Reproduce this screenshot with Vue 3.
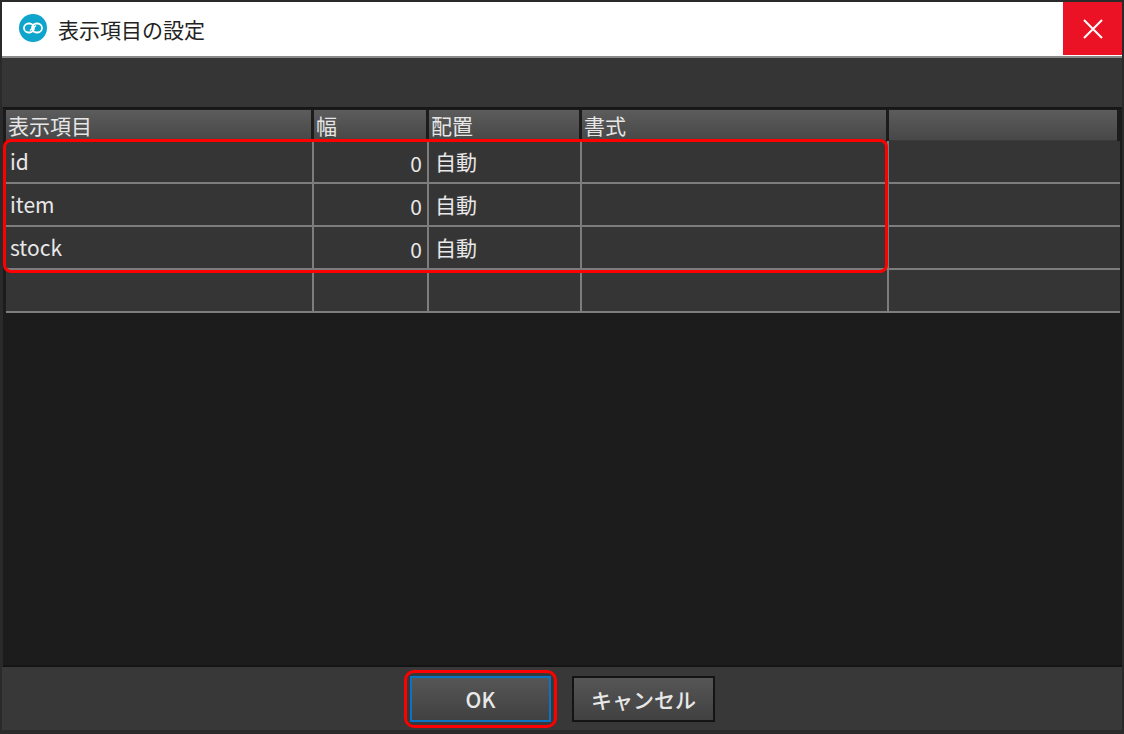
<script setup>
const columns = [
  { label: '表示項目', width: 308 },
  { label: '幅', width: 115 },
  { label: '配置', width: 153 },
  { label: '書式', width: 307 },
  { label: '', width: 231 }
]

const rows = [
  { name: 'id', width: 0, align: '自動' },
  { name: 'item', width: 0, align: '自動' },
  { name: 'stock', width: 0, align: '自動' },
  { name: '', width: '', align: '' }
]

const gridColumns = columns.map((c) => c.width + 'px').join(' ')
</script>

<template>
  <div class="dialog">
    <header class="title-bar">
      <svg class="app-icon" width="28" height="28" viewBox="0 0 28 28">
        <circle cx="14" cy="14" r="14" fill="#0ea5cc" />
        <rect x="5" y="9.5" width="10" height="9" rx="4.5" fill="none" stroke="#fff" stroke-width="1.8" />
        <rect x="13" y="9.5" width="10" height="9" rx="4.5" fill="none" stroke="#fff" stroke-width="1.8" />
        <path d="M11 16.5L17 11.5" stroke="#fff" stroke-width="1.6" />
      </svg>
      <span class="title">表示項目の設定</span>
      <button class="close-btn" aria-label="閉じる">
        <svg width="20" height="20" viewBox="0 0 20 20">
          <path d="M1 1L19 19M19 1L1 19" stroke="#fff" stroke-width="2" fill="none" />
        </svg>
      </button>
    </header>

    <div class="toolbar" />

    <main class="grid-area">
      <div class="grid-wrap">
        <div class="grid-head" :style="{ gridTemplateColumns: gridColumns }">
          <div v-for="col in columns" :key="col.label" class="head-cell">{{ col.label }}</div>
        </div>
        <div
          v-for="(row, i) in rows"
          :key="i"
          class="grid-row"
          :style="{ gridTemplateColumns: gridColumns }"
        >
          <div class="cell cell-name">{{ row.name }}</div>
          <div class="cell cell-num">{{ row.width }}</div>
          <div class="cell cell-align">{{ row.align }}</div>
          <div class="cell" />
          <div class="cell cell-last" />
        </div>
        <div class="row-highlight" />
      </div>
    </main>

    <footer class="footer">
      <div class="ok-wrap">
        <button class="btn btn-ok">OK</button>
      </div>
      <button class="btn btn-cancel">キャンセル</button>
    </footer>
  </div>
</template>

<style scoped>
.dialog {
  width: 1124px;
  height: 734px;
  box-sizing: border-box;
  padding: 2px 2px 4px 2px;
  background: #2a2a2a;
  display: flex;
  flex-direction: column;
  font-family: 'Noto Sans CJK JP', 'Open Sans', sans-serif;
  overflow: hidden;
}

.title-bar {
  height: 56px;
  flex-shrink: 0;
  box-sizing: border-box;
  background: #fff;
  border-bottom: 2px solid #8a8a8a;
  display: flex;
  align-items: flex-start;
  padding-left: 17px;
}

.app-icon {
  margin-top: 12px;
}

.title {
  margin-left: 11px;
  margin-top: 9px;
  font-size: 21px;
  line-height: 36px;
  color: #222;
}

.close-btn {
  margin-left: auto;
  width: 59px;
  height: 53px;
  border: 0;
  padding: 0;
  background: #ec1225;
  display: flex;
  align-items: center;
  justify-content: center;
}

.toolbar {
  height: 49px;
  flex-shrink: 0;
  background: #353535;
}

.grid-area {
  flex: 1;
  margin-left: 1px;
  background: #1c1c1c;
  border-top: 2px solid #161616;
  border-bottom: 2px solid #141414;
  padding: 1px 0 0 3px;
}

.grid-wrap {
  position: relative;
  width: 1114px;
}

.grid-head,
.grid-row {
  display: grid;
}

.head-cell {
  height: 31px;
  box-sizing: border-box;
  margin-right: 3px;
  padding-left: 2px;
  background: linear-gradient(#5c5c5c, #484848);
  border-bottom: 1px solid #3a3a3a;
  color: #e6e6e6;
  font-size: 21px;
  line-height: 30px;
}

.grid-row {
  height: 43px;
  box-sizing: border-box;
  background: #353535;
  border-bottom: 2px solid #7d7d7d;
}

.cell {
  border-right: 2px solid #7d7d7d;
  color: #e8e8e8;
  font-size: 21px;
  line-height: 40px;
  white-space: nowrap;
}

.cell-last {
  border-right: 0;
}

.cell-name {
  padding-left: 4px;
}

.cell-num {
  text-align: right;
  padding-right: 5px;
  padding-top: 2px;
}

.cell-align {
  padding-left: 6px;
}

.row-highlight {
  position: absolute;
  left: -3px;
  top: 29px;
  width: 885px;
  height: 134px;
  box-sizing: border-box;
  border: 3px solid #f00;
  border-radius: 8px;
  pointer-events: none;
}

.footer {
  height: 63px;
  flex-shrink: 0;
  background: #383838;
  display: flex;
  align-items: center;
  padding-left: 402px;
  gap: 15px;
}

.ok-wrap {
  padding: 3px;
  border: 3px solid #f00;
  border-radius: 10px;
  display: flex;
}

.btn {
  height: 46px;
  box-sizing: border-box;
  padding: 0;
  background: linear-gradient(#565656, #414141);
  color: #e8e8e8;
  font-family: inherit;
  font-size: 21px;
  font-weight: 500;
  line-height: 40px;
}

.btn-ok {
  width: 141px;
  border: 2px solid #0a74c4;
}

.btn-cancel {
  width: 143px;
  border: 2px solid #141414;
}
</style>

<style>
html,
body {
  margin: 0;
  background: #2a2a2a;
}
</style>
